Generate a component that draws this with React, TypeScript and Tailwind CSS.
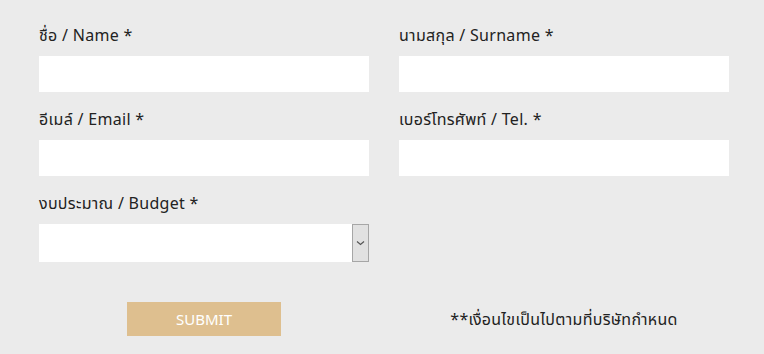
import React from "react";

const font = { fontFamily: '"Noto Sans", "Noto Sans Thai", "Open Sans", sans-serif' };

function Field({ label, children }: { label: string; children: React.ReactNode }) {
  return (
    <div className="flex flex-col">
      <label className="text-[16px] leading-[24px] tracking-[0.3px] text-[#222] mb-[9px]">{label}</label>
      {children}
    </div>
  );
}

export default function App() {
  return (
    <div className="w-[764px] h-[354px] bg-[#ebebeb] pl-[39px] pr-[35px] pt-[23px]" style={font}>
      <div className="grid grid-cols-[330px_330px] gap-x-[30px] gap-y-[15px]">
        <Field label="ชื่อ / Name *">
          <input className="h-[36px] bg-white outline-none" />
        </Field>
        <Field label="นามสกุล / Surname *">
          <input className="h-[36px] bg-white outline-none" />
        </Field>
        <Field label="อีเมล์ / Email *">
          <input className="h-[36px] bg-white outline-none" />
        </Field>
        <Field label="เบอร์โทรศัพท์ / Tel. *">
          <input className="h-[36px] bg-white outline-none" />
        </Field>
        <Field label="งบประมาณ / Budget *">
          <div className="h-[38px] bg-white flex justify-end">
            <div className="w-[17px] h-full bg-[#e1e1e1] border border-[#a6a6a6] flex items-center justify-center">
              <svg width="9" height="6" viewBox="0 0 9 6" fill="none">
                <path d="M1 1.5 L4.5 4.5 L8 1.5" stroke="#555" strokeWidth="1.2" />
              </svg>
            </div>
          </div>
        </Field>
        <div />
      </div>
      <div className="grid grid-cols-[330px_330px] gap-x-[30px] mt-[40px]">
        <div className="flex justify-center">
          <button className="w-[154px] h-[34px] bg-[#debf8f] text-white text-[15px]">SUBMIT</button>
        </div>
        <div className="flex justify-center items-center h-[34px] text-[16px] tracking-[0.3px] text-[#222]">
          **เงื่อนไขเป็นไปตามที่บริษัทกำหนด
        </div>
      </div>
    </div>
  );
}
